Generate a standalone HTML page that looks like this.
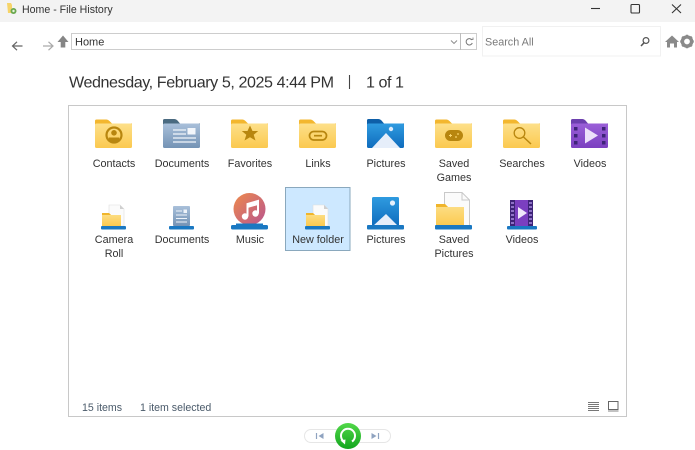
<!DOCTYPE html>
<html>
<head>
<meta charset="utf-8">
<style>
html,body{margin:0;padding:0;background:#fff;width:695px;height:450px;overflow:hidden}
svg{display:block;filter:blur(.35px)}
text{font-family:"Liberation Sans",sans-serif}
.l{font-size:10.800px;fill:#333;text-anchor:middle}
</style>
</head>
<body>
<svg width="695" height="450" viewBox="0 0 695 450" xmlns="http://www.w3.org/2000/svg">
<defs>
<linearGradient id="y" x1="0" y1="0" x2="0" y2="1"><stop offset="0" stop-color="#fde08a"/><stop offset="1" stop-color="#fbc94f"/></linearGradient>
<linearGradient id="bl" x1="0" y1="0" x2="0" y2="1"><stop offset="0" stop-color="#2f9be0"/><stop offset="1" stop-color="#0f6cbd"/></linearGradient>
<linearGradient id="sl" x1="0" y1="0" x2="0" y2="1"><stop offset="0" stop-color="#a9c0da"/><stop offset="1" stop-color="#7493b5"/></linearGradient>
<linearGradient id="pu" x1="0" y1="0" x2="0" y2="1"><stop offset="0" stop-color="#9a5fd8"/><stop offset="1" stop-color="#7b3fc0"/></linearGradient>
<linearGradient id="mu" x1="0" y1="0" x2="1" y2="1"><stop offset="0" stop-color="#ee8a4c"/><stop offset="1" stop-color="#b8558f"/></linearGradient>
<linearGradient id="gr" x1="0" y1="0" x2="0" y2="1"><stop offset="0" stop-color="#52d84a"/><stop offset="1" stop-color="#12a51e"/></linearGradient>
<g id="yfolder">
<path d="M0 2q0-1.500 1.500-1.500h10q1.500 0 3 1.500L17 4.500H37V10H0Z" fill="#f3b72f"/>
<path d="M0 6Q0 4.500 1.500 4.500H35.500q1.500 0 1.500 1.500V27.500q0 1.500-1.500 1.500H1.500q-1.500 0-1.500-1.500Z" fill="url(#y)"/>
</g>
<g id="smallfolder">
<path d="M8 0H19L23 4V21H8Z" fill="#fbfbfb" stroke="#dedede" stroke-width=".6"/>
<path d="M19 0V4H23Z" fill="#cfcfcf"/>
<path d="M1 8H8L10 10H20V21H1Z" fill="url(#y)"/>
<path d="M1 8H8L10 10H1Z" fill="#f0b52c"/>
<rect x="0" y="21" width="25" height="3.500" rx="1" fill="#1a78c2"/>
</g>
</defs>

<!-- title bar -->
<rect x="0" y="0" width="695" height="22" fill="#f3f3f3"/>
<path d="M7 3h4l1 2v8H8Z" fill="#f6d469"/>
<circle cx="13.500" cy="11" r="3" fill="#6aa84f"/>
<circle cx="13.500" cy="11" r="1.200" fill="#e8f3e0"/>
<text x="22" y="13" font-size="10.600" fill="#333">Home - File History</text>
<path d="M591 8.500H600" stroke="#333" stroke-width="1.100"/>
<rect x="631" y="4.500" width="8.500" height="8.500" rx="1" fill="none" stroke="#333" stroke-width="1.100"/>
<path d="M672 4.500L681 13M681 4.500L672 13" stroke="#333" stroke-width="1.100"/>

<!-- nav -->
<path d="M22.500 46H13M17 41.800L12.500 46L17 50.200" fill="none" stroke="#666" stroke-width="1.200"/>
<path d="M43 46H52.500M48.500 41.800L53 46L48.500 50.200" fill="none" stroke="#aaa" stroke-width="1.200"/>
<path d="M63 35.500L68.500 42H65.300V47.500H60.700V42H57.500Z" fill="#858585"/>

<!-- address -->
<rect x="71.500" y="33.500" width="405" height="16" fill="#fff" stroke="#cdcdcd"/>
<path d="M460.500 33V50" stroke="#bdbdbd"/>
<text x="75" y="45.500" font-size="11" fill="#333">Home</text>
<path d="M451 40.500L454 43.500L457 40.500" fill="none" stroke="#888" stroke-width=".9"/>
<path d="M472 40A3.200 3.200 0 1 0 472.300 43" fill="none" stroke="#777"/>
<path d="M470.500 39.500H473V37.500" fill="none" stroke="#777" stroke-width=".8"/>

<!-- search -->
<rect x="482.500" y="26.500" width="178" height="29.500" fill="#fff" stroke="#f1f1f1"/>
<text x="485" y="45.500" font-size="10.800" fill="#7a7a7a">Search All</text>
<circle cx="646" cy="40.500" r="2.900" fill="none" stroke="#555" stroke-width="1.200"/>
<path d="M644 42.800L641 46" stroke="#555" stroke-width="1.500"/>
<path d="M665 42L672 35.500L679 42H677V47.500H674V43.500H670V47.500H667V42Z" fill="#8a8a8a"/>
<circle cx="687" cy="41.500" r="4.600" fill="none" stroke="#8a8a8a" stroke-width="3.400"/>
<path d="M687 34.700V48.300M680.200 41.500H693.800M682.200 36.700L691.800 46.300M691.800 36.700L682.200 46.300" stroke="#8a8a8a" stroke-width="2.200" stroke-dasharray="2.500 8.600 2.500"/>

<!-- heading -->
<text x="69" y="87.500" font-size="16.100" fill="#333" textLength="265">Wednesday, February 5, 2025 4:44 PM</text>
<path d="M349.500 75V89" stroke="#444" stroke-width="1.100"/>
<text x="366" y="87.500" font-size="16.100" fill="#333" textLength="38">1 of 1</text>

<!-- panel -->
<rect x="68.500" y="105.500" width="558" height="311" fill="#fff" stroke="#c8c8c8"/>

<!-- row 1 -->
<use href="#yfolder" x="95" y="119"/>
<circle cx="114" cy="135" r="7.500" fill="none" stroke="#b8860f" stroke-width="2.200"/>
<circle cx="114" cy="132.800" r="2.800" fill="#b8860f"/>
<path d="M108.800 137.500h10.400v1.500a5.200 3.500 0 0 1-10.400 0Z" fill="#b8860f"/>
<text class="l" x="114" y="167">Contacts</text>

<path d="M163 120.500q0-1.500 1.500-1.500h10q1.500 0 3 1.500L180 123.500h20v6h-37Z" fill="#4a6a80"/>
<path d="M163 125q0-1.500 1.500-1.500h34q1.500 0 1.500 1.500v21.500q0 1.500-1.500 1.500h-34q-1.500 0-1.500-1.500Z" fill="url(#sl)"/>
<path d="M173 130H186M173 134H186M173 138H196M173 142H196" stroke="#f2f6fb" stroke-width="1.300"/>
<rect x="187.500" y="128" width="8" height="6.500" fill="#f2f6fb"/>
<text class="l" x="182" y="167">Documents</text>

<use href="#yfolder" x="231" y="119"/>
<path d="M250 125.500L252.500 131H258.200L253.700 134.800L255.500 140.500L250 137.200L244.500 140.500L246.300 134.800L241.800 131H247.500Z" fill="#b8860f"/>
<text class="l" x="250" y="167">Favorites</text>

<use href="#yfolder" x="299" y="119"/>
<rect x="309.500" y="131.500" width="17" height="8.500" rx="4.200" fill="none" stroke="#b8860f" stroke-width="1.800"/>
<path d="M316 131V141M320 131V141" stroke="#fdd772" stroke-width="0"/>
<path d="M314 135.700H322" stroke="#fbd66f" stroke-width="3"/>
<path d="M314 135.700H322" stroke="#b8860f" stroke-width="1.700"/>
<text class="l" x="318" y="167">Links</text>

<path d="M367 120.500q0-1.500 1.500-1.500h10q1.500 0 3 1.500L384 123.500h20v6h-37Z" fill="#0e5fa8"/>
<path d="M367 125q0-1.500 1.500-1.500h34q1.500 0 1.500 1.500v21.500q0 1.500-1.500 1.500h-34q-1.500 0-1.500-1.500Z" fill="url(#bl)"/>
<path d="M372 148L386 133L400 148Z" fill="#e6eefa"/>
<circle cx="391" cy="129" r="2.200" fill="#dbeafb"/>
<text class="l" x="386" y="167">Pictures</text>

<use href="#yfolder" x="435" y="119"/>
<rect x="445" y="130" width="18" height="11" rx="5.500" fill="#b8860f"/>
<path d="M449 135.500h3M450.500 134v3" stroke="#fbd66f" stroke-width=".9"/>
<circle cx="458" cy="134" r=".9" fill="#fbd66f"/><circle cx="456" cy="137" r=".9" fill="#fbd66f"/>
<text class="l" x="454" y="167">Saved</text>
<text class="l" x="454" y="181">Games</text>

<use href="#yfolder" x="503" y="119"/>
<circle cx="519.500" cy="133" r="5.300" fill="none" stroke="#b8860f" stroke-width="1.300"/>
<path d="M523.500 137L531 144" stroke="#b8860f" stroke-width="1.500"/>
<text class="l" x="522" y="167">Searches</text>

<path d="M571 120.500q0-1.500 1.500-1.500h10q1.500 0 3 1.500L588 123.500h20v6h-37Z" fill="#6c3fae"/>
<path d="M571 125q0-1.500 1.500-1.500h34q1.500 0 1.500 1.500v21.500q0 1.500-1.500 1.500h-34q-1.500 0-1.500-1.500Z" fill="url(#pu)"/>
<path d="M585 127.500L598 135.500L585 143.500Z" fill="#ecdffa"/>
<g fill="#3e2378"><rect x="574" y="127" width="3.500" height="3.500"/><rect x="574" y="134" width="3.500" height="3.500"/><rect x="574" y="141" width="3.500" height="3.500"/><rect x="602" y="127" width="3.500" height="3.500"/><rect x="602" y="134" width="3.500" height="3.500"/><rect x="602" y="141" width="3.500" height="3.500"/></g>
<text class="l" x="590" y="167">Videos</text>

<!-- row 2 -->
<use href="#smallfolder" x="101" y="205"/>
<text class="l" x="114" y="243">Camera</text>
<text class="l" x="114" y="257">Roll</text>

<rect x="173" y="206" width="17" height="20" rx="1" fill="url(#sl)"/>
<path d="M176 211H182M176 215H187M176 218.500H187M176 222H187" stroke="#eef3f9" stroke-width="1"/>
<rect x="183.500" y="209.500" width="3.500" height="3.500" fill="#eef3f9"/>
<rect x="169" y="226" width="25" height="3.500" rx="1" fill="#1a78c2"/>
<text class="l" x="182" y="243">Documents</text>

<circle cx="249.500" cy="209" r="16" fill="url(#mu)"/>
<path d="M247.500 216.500V204L258 201V213.500" fill="none" stroke="#fff" stroke-width="2"/>
<path d="M247.500 204L258 201V205L247.500 208Z" fill="#fff"/>
<circle cx="245" cy="216.500" r="3.200" fill="#fff"/>
<circle cx="255.500" cy="213.500" r="3.200" fill="#fff"/>
<rect x="231" y="225" width="37" height="4.500" rx="1.500" fill="#1a78c2"/>
<path d="M236 223.500H263V225.500H236Z" fill="#1a78c2"/>
<text class="l" x="250" y="243">Music</text>

<rect x="285.500" y="187.500" width="64.500" height="63" fill="#cde8ff" stroke="#8aa8bd"/>
<use href="#smallfolder" x="305" y="205"/>
<text class="l" x="318" y="243">New folder</text>

<rect x="372" y="197" width="27" height="29" rx="1.500" fill="url(#bl)"/>
<path d="M373 226L386 214L398 226Z" fill="#e6eefa"/>
<circle cx="392.500" cy="203" r="2.600" fill="#e6f1fc"/>
<rect x="367" y="225" width="37" height="4.500" rx="1" fill="#1a78c2"/>
<text class="l" x="386" y="243">Pictures</text>

<path d="M444.500 192.500H462L469.500 200V226H444.500Z" fill="#fbfbfb" stroke="#c9c9c9"/>
<path d="M462 192.500V200H469.500" fill="none" stroke="#c9c9c9"/>
<path d="M436 204H445L448 207H464V226H436Z" fill="url(#y)"/>
<path d="M436 204H445L448 207H436Z" fill="#f0b52c"/>
<rect x="435" y="225" width="37" height="4.500" rx="1" fill="#1a78c2"/>
<text class="l" x="454" y="243">Saved</text>
<text class="l" x="454" y="257">Pictures</text>

<rect x="510" y="200" width="23" height="26" fill="#7b3fc0"/>
<rect x="510" y="200" width="5" height="26" fill="#3e2378"/>
<rect x="528" y="200" width="5" height="26" fill="#3e2378"/>
<path d="M511 203H514M511 207H514M511 211H514M511 215H514M511 219H514M511 223H514M529 203H532M529 207H532M529 211H532M529 215H532M529 219H532M529 223H532" stroke="#a98be0" stroke-width="1.500"/>
<path d="M518 207L527 213L518 219Z" fill="#f0e8fb"/>
<rect x="507" y="226" width="30" height="3.500" rx="1" fill="#1a78c2"/>
<text class="l" x="522" y="243">Videos</text>

<!-- status -->
<text x="82" y="411" font-size="10.600" fill="#4a5a6a">15 items</text>
<text x="140" y="411" font-size="10.600" fill="#4a5a6a">1 item selected</text>
<path d="M588 402.500H599M588 404.500H599M588 406.500H599M588 408.500H599M588 410.500H599" stroke="#777" stroke-width=".9"/>
<rect x="608.500" y="401.500" width="9.500" height="8" fill="none" stroke="#666"/>
<path d="M608 411H618.500" stroke="#999" stroke-width="1.200"/>

<!-- bottom nav -->
<rect x="304.500" y="429.500" width="86" height="13" rx="6.500" fill="#fff" stroke="#e6e6e6"/>
<path d="M316.500 433V439" stroke="#8fa3c0" stroke-width="1.200"/>
<path d="M323.500 433V439L318.500 436Z" fill="#8fa3c0"/>
<path d="M378.500 433V439" stroke="#8fa3c0" stroke-width="1.200"/>
<path d="M371.500 433V439L376.500 436Z" fill="#8fa3c0"/>
<circle cx="348" cy="436" r="13" fill="url(#gr)"/>
<path d="M344 441.500A7 7 0 1 1 352 441.500" fill="none" stroke="#fff" stroke-width="2"/>
<path d="M340.500 440.500L345.500 439.500L345 444.500Z" fill="#fff"/>
</svg>
</body>
</html>
